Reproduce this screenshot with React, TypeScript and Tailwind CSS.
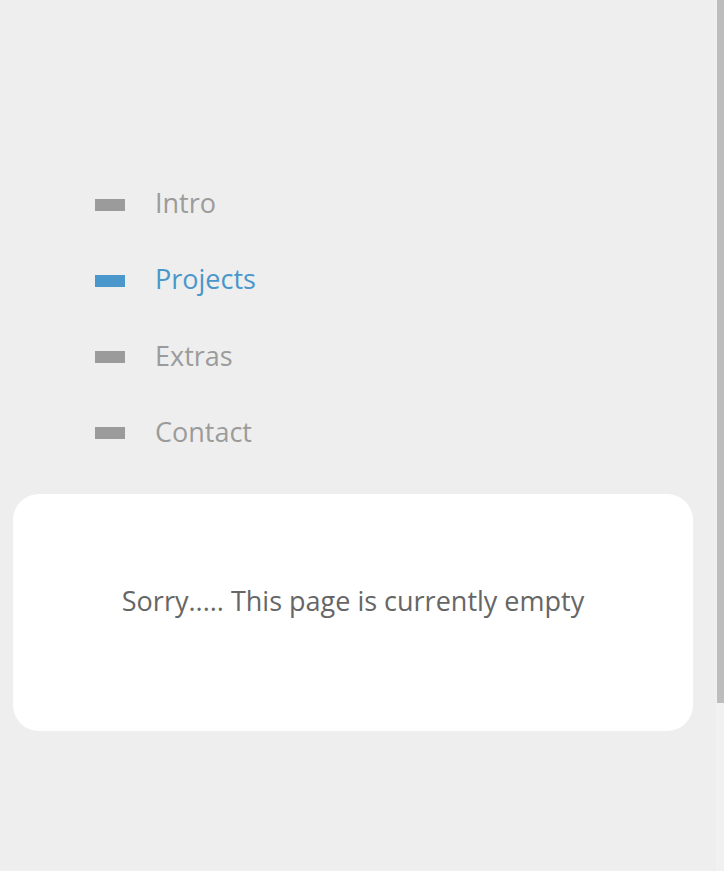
import React from "react";

const NAV = [
  { label: "Intro", active: false },
  { label: "Projects", active: true },
  { label: "Extras", active: false },
  { label: "Contact", active: false },
];

export default function App() {
  return (
    <div
      className="min-h-[871px] w-full bg-[#eeeeee] pr-[8px]"
      style={{ fontFamily: '"Open Sans", "Liberation Sans", sans-serif' }}
    >
      {/* Side navigation */}
      <nav className="flex flex-col gap-[36.33px] pl-[95px] pt-[183px]">
        {NAV.map((item) => (
          <a key={item.label} className="flex h-[40px] items-center gap-[30px]">
            <span
              className={`mt-[3px] h-[12px] w-[30px] ${item.active ? "bg-[#4a97cb]" : "bg-[#9b9b9b]"}`}
            />
            <span
              className={`text-[27px] leading-[40px] ${item.active ? "text-[#4a97cb]" : "text-[#9b9b9b]"}`}
            >
              {item.label}
            </span>
          </a>
        ))}
      </nav>

      {/* Empty page card */}
      <div className="ml-[13px] mr-[23px] mt-[42px] flex h-[237px] items-center justify-center rounded-[26px] bg-white pb-[22px]">
        <p className="text-[27px] text-[#666666]">Sorry..... This page is currently empty</p>
      </div>

      {/* Scrollbar imitation */}
      <div className="fixed right-0 top-0 h-[871px] w-[8px] bg-[#f1f1f1]">
        <div className="ml-[1px] h-[703px] w-[7px] bg-[#bdbdbd]" />
      </div>
    </div>
  );
}
